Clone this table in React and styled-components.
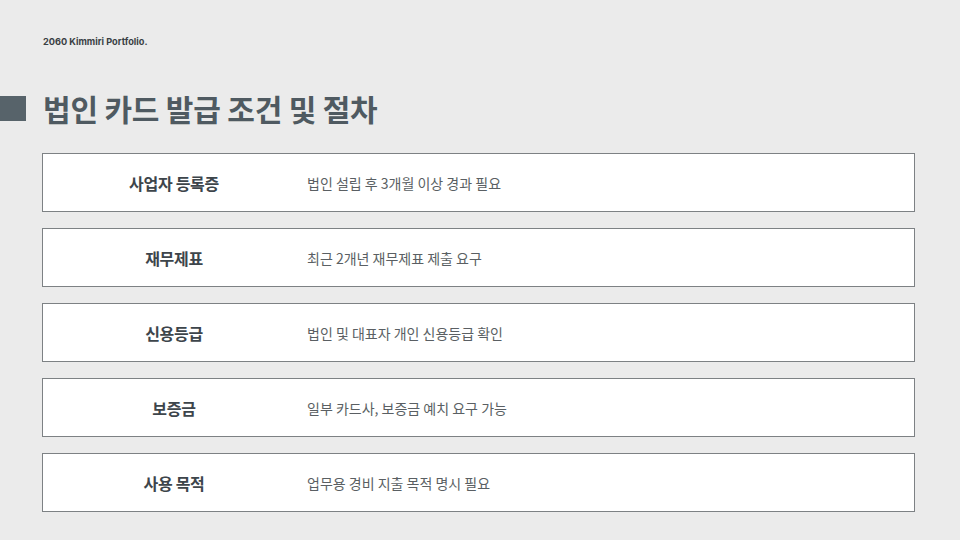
import styled, { createGlobalStyle } from 'styled-components'

const GlobalStyle = createGlobalStyle`
  html, body {
    margin: 0;
    padding: 0;
    background: #ebebeb;
  }
  body {
    font-family: "Noto Sans CJK KR", "Noto Sans", sans-serif;
  }
`

const rows = [
  { label: '사업자 등록증', desc: '법인 설립 후 3개월 이상 경과 필요' },
  { label: '재무제표', desc: '최근 2개년 재무제표 제출 요구' },
  { label: '신용등급', desc: '법인 및 대표자 개인 신용등급 확인' },
  { label: '보증금', desc: '일부 카드사, 보증금 예치 요구 가능' },
  { label: '사용 목적', desc: '업무용 경비 지출 목적 명시 필요' },
]

const App = () => {
  return (
    <>
      <GlobalStyle />
      <Page>
        <Brand>2060 Kimmiri Portfolio.</Brand>
        <TitleRow>
          <Marker />
          <Title>법인 카드 발급 조건 및 절차</Title>
        </TitleRow>
        <List>
          {rows.map((row) => (
            <Row key={row.label}>
              <Label>{row.label}</Label>
              <Desc>{row.desc}</Desc>
            </Row>
          ))}
        </List>
      </Page>
    </>
  )
}

export default App

const Page = styled.div`
  width: 960px;
  height: 540px;
  box-sizing: border-box;
  padding-top: 35px;
  overflow: hidden;
`

const Brand = styled.div`
  margin-left: 43px;
  font-family: Inter, "Noto Sans", sans-serif;
  font-weight: 700;
  font-size: 9.2px;
  line-height: 14px;
  color: #3a3f44;
`

const TitleRow = styled.div`
  display: flex;
  align-items: center;
  gap: 17px;
  margin-top: 38px;
  height: 42px;
`

const Marker = styled.div`
  width: 26px;
  height: 25px;
  background: #57636a;
`

const Title = styled.h1`
  margin: 0;
  font-size: 30px;
  font-weight: 700;
  color: #4f5a61;
  letter-spacing: -0.2px;
  line-height: 42px;
`

const List = styled.div`
  display: flex;
  flex-direction: column;
  gap: 16px;
  margin: 24px 45px 0 42px;
`

const Row = styled.div`
  display: grid;
  grid-template-columns: 262px 1fr;
  align-items: center;
  height: 59px;
  box-sizing: border-box;
  background: #ffffff;
  border: 1px solid #7d8184;
`

const Label = styled.div`
  text-align: center;
  font-size: 16px;
  font-weight: 700;
  color: #3d454b;
  letter-spacing: -0.3px;
`

const Desc = styled.div`
  padding-left: 2px;
  font-size: 14px;
  color: #5a5f63;
`
